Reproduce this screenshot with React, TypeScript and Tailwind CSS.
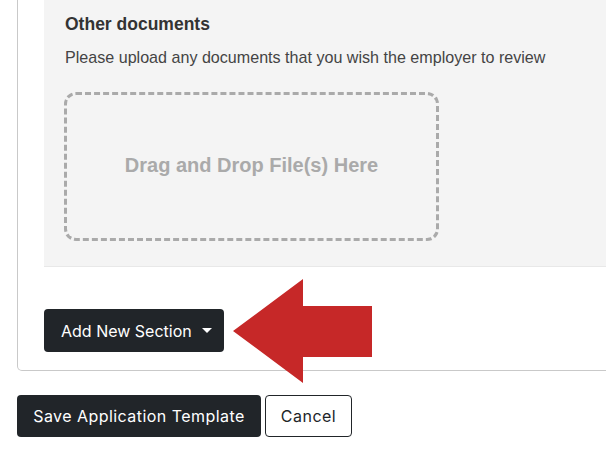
export default function App() {
  return (
    <div className="relative w-[606px] h-[455px] overflow-hidden bg-white font-['Liberation_Sans',Arial,sans-serif]">
      <div className="ml-[17px] w-[660px] border-x border-b border-[#c9c9c9] rounded-b-[5px] pl-[26px] pb-[18px]">
        <div className="bg-[#f4f4f4] border-b border-[#e8e8e8] pl-[21px] pt-[13px] pb-[25px]">
          <h3 className="text-[17.5px] leading-[22px] font-bold text-[#333]">Other documents</h3>
          <p className="mt-[11px] text-[16.1px] leading-[22px] text-[#444]">
            Please upload any documents that you wish the employer to review
          </p>
          <div className="mt-[24px] ml-[-1px] w-[375px] h-[149px] border-[3px] border-dashed border-[#aaaaaa] rounded-[12px] flex items-center justify-center">
            <span className="mb-[4px] text-[20px] font-bold text-[#aaaaaa]">Drag and Drop File(s) Here</span>
          </div>
        </div>
        <div className="mt-[42px] flex">
          <button
            type="button"
            className="h-[43px] w-[180px] rounded-[4px] bg-[#212529] text-white text-[16px] font-['Inter',sans-serif] flex items-center pl-[17px] gap-[10px]"
          >
            Add New Section
            <span className="inline-block w-0 h-0 border-x-[5px] border-x-transparent border-t-[5px] border-t-white"></span>
          </button>
        </div>
      </div>
      <div className="ml-[17px] mt-[24px] flex gap-[4px] font-['Inter',sans-serif]">
        <button
          type="button"
          className="h-[42px] w-[244px] rounded-[4px] bg-[#212529] text-white text-[16px] tracking-[0.45px]"
        >
          Save Application Template
        </button>
        <button
          type="button"
          className="h-[42px] w-[87px] rounded-[4px] bg-white border border-[#212529] text-[#212529] text-[16px] tracking-[0.5px]"
        >
          Cancel
        </button>
      </div>
      <svg
        className="absolute left-[233px] top-[279px]"
        width="139"
        height="104"
        viewBox="0 0 139 104"
      >
        <polygon points="0,52 70,0 70,27 139,27 139,78 70,78 70,104" fill="#c62828" />
      </svg>
    </div>
  );
}
